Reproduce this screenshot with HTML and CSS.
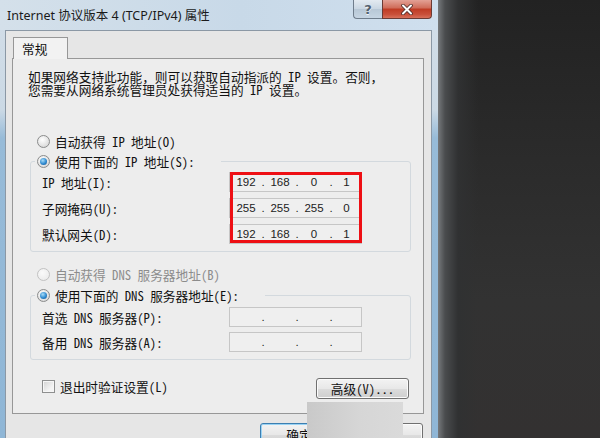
FILE: index.html
```html
<!DOCTYPE html>
<html lang="zh-CN">
<head>
  <meta charset="UTF-8">
  <title>Internet 协议版本 4 (TCP/IPv4) 属性</title>
  <link rel="stylesheet" href="styles.css">
</head>
<body>

  <div class="window">
    <div class="titlebar">
      <span class="title">Internet 协议版本 4 (TCP/IPv4) 属性</span>
      <div class="caption-btns">
        <span class="cap help">?</span>
        <span class="cap close">
          <svg width="12" height="11" viewBox="0 0 12 11">
            <path d="M2 1.5 L10 9.5 M10 1.5 L2 9.5" stroke="#4a2a26" stroke-width="3.6" stroke-linecap="round"/>
            <path d="M2 1.5 L10 9.5 M10 1.5 L2 9.5" stroke="#ffffff" stroke-width="2" stroke-linecap="round"/>
          </svg>
        </span>
      </div>
    </div>

    <div class="client">
      <div class="tabs">
        <span class="tab">常规</span>
      </div>

      <div class="panel">
        <p class="intro">如果网络支持此功能，则可以获取自动指派的 IP 设置。否则，<br>您需要从网络系统管理员处获得适当的 IP 设置。</p>

        <div class="opt first-opt"><span class="radio"></span>自动获得 IP 地址(O)</div>

        <div class="group ip-group">
          <div class="legend legend-ip"><span class="radio on"></span>使用下面的 IP 地址(S):</div>
          <div class="rows ip-rows">
            <span class="lbl">IP 地址(I):</span>
            <div class="ipf"><span class="seg">192</span><span class="dot">.</span><span class="seg">168</span><span class="dot">.</span><span class="seg">0</span><span class="dot">.</span><span class="seg last">1</span></div>
            <span class="lbl">子网掩码(U):</span>
            <div class="ipf"><span class="seg">255</span><span class="dot">.</span><span class="seg">255</span><span class="dot">.</span><span class="seg">255</span><span class="dot">.</span><span class="seg last">0</span></div>
            <span class="lbl">默认网关(D):</span>
            <div class="ipf"><span class="seg">192</span><span class="dot">.</span><span class="seg">168</span><span class="dot">.</span><span class="seg">0</span><span class="dot">.</span><span class="seg last">1</span></div>
          </div>
        </div>

        <div class="opt dns-opt disabled"><span class="radio off"></span>自动获得 DNS 服务器地址(B)</div>

        <div class="group dns-group">
          <div class="legend legend-dns"><span class="radio on"></span>使用下面的 DNS 服务器地址(E):</div>
          <div class="rows dns-rows">
            <span class="lbl">首选 DNS 服务器(P):</span>
            <div class="ipf"><span class="seg"></span><span class="dot">.</span><span class="seg"></span><span class="dot">.</span><span class="seg"></span><span class="dot">.</span><span class="seg last"></span></div>
            <span class="lbl">备用 DNS 服务器(A):</span>
            <div class="ipf"><span class="seg"></span><span class="dot">.</span><span class="seg"></span><span class="dot">.</span><span class="seg"></span><span class="dot">.</span><span class="seg last"></span></div>
          </div>
        </div>

        <div class="bottom-row">
          <label class="check"><span class="box"></span>退出时验证设置(L)</label>
          <button class="btn advanced">高级(V)...</button>
        </div>
      </div>

      <div class="actions">
        <button class="btn ok">确定</button>
        <button class="btn">取消</button>
      </div>
    </div>

    <div class="smudge"></div>
  </div>

  <div class="backdrop"></div>

</body>
</html>
```

FILE: styles.css
```css
body {
  margin: 0;
  width: 600px;
  height: 438px;
  overflow: hidden;
  display: flex;
  background: #2a2a2a;
  font-family: "Noto Sans Mono CJK SC", "Noto Sans CJK SC", monospace;
  font-size: 12.7px;
  color: #111;
}

/* Window frame */
.window {
  width: 438px;
  flex: none;
  display: flex;
  flex-direction: column;
  position: relative;
  background: linear-gradient(to bottom, #d3dee8 0, #cbd9e5 110px, #97bbd8 138px, #8fb6d6 438px);
}

.titlebar {
  height: 30px;
  flex: none;
  display: flex;
  background: linear-gradient(to right, #d4e0ea, #c8d9e8 55%, #cfdfee);
}

.title {
  flex: 1;
  padding-left: 7px;
  line-height: 31px;
  font-family: "Noto Sans", "Noto Sans CJK SC", sans-serif;
  font-size: 12.5px;
  color: #1a1a1a;
}

.caption-btns {
  display: flex;
  margin-right: 6px;
  height: 19px;
}

.cap {
  display: flex;
  align-items: center;
  justify-content: center;
  box-sizing: border-box;
  height: 19px;
  border: 1px solid #6f7d8c;
  border-top: none;
}

.help {
  width: 29px;
  border-right: none;
  border-bottom-left-radius: 4px;
  background: linear-gradient(to bottom, #e3eaf1, #c9d6e2 50%, #b7c7d6 51%, #c6d5e3);
  font-family: "DejaVu Sans", sans-serif;
  font-weight: bold;
  font-size: 13px;
  color: #53606e;
  text-shadow: 0 1px 0 #f4f7fa;
}

.close {
  width: 50px;
  border-color: #6b3b35;
  border-bottom-right-radius: 4px;
  background: linear-gradient(to bottom, #e3a195, #cf6b58 45%, #bf3b24 50%, #c9503a 80%, #d8705a);
}

/* Client area */
.client {
  flex: 1;
  margin: 0 6px 0 5px;
  border: 1px solid #8b98a5;
  border-bottom: none;
  background: #e6e6e6;
  padding: 6px 7px 0 6px;
}

.tabs {
  display: flex;
  padding-left: 1px;
}

.tab {
  position: relative;
  z-index: 1;
  box-sizing: border-box;
  width: 55px;
  height: 22px;
  margin-bottom: -1px;
  padding-left: 8px;
  line-height: 21px;
  border: 1px solid #979797;
  border-bottom: none;
  background: #f2f2f2;
}

.panel {
  box-sizing: border-box;
  height: 356px;
  border: 1px solid #979797;
  background: #ededed;
}

.intro {
  margin: 11px 0 0 15px;
  line-height: 13px;
}

/* Radio options */
.opt, .legend {
  display: flex;
  align-items: center;
  height: 20px;
}

.opt {
  padding-left: 24px;
}

.first-opt {
  margin-top: 35px;
}

.dns-opt {
  margin-top: 12px;
}

.disabled {
  color: #8c8c8c;
}

.radio {
  position: relative;
  box-sizing: border-box;
  width: 13px;
  height: 13px;
  margin-right: 5px;
  border-radius: 50%;
  border: 1px solid #8a8b8b;
  background: radial-gradient(circle at 40% 35%, #ffffff, #e2e2e2 60%, #cdcdcd);
}

.radio.on::after {
  content: "";
  position: absolute;
  left: 2px;
  top: 2px;
  width: 7px;
  height: 7px;
  border-radius: 50%;
  background: radial-gradient(circle at 40% 35%, #a8dcf8, #2f8ad0 55%, #124f88);
}

.radio.off {
  border-color: #c2c2c2;
  background: radial-gradient(circle at 40% 35%, #fafafa, #e8e8e8);
}

/* Group boxes */
.group {
  margin: 0 12px 0 17px;
  border: 1px solid #d3d9de;
  border-radius: 3px;
  padding-bottom: 7px;
}

.ip-group {
  margin-top: 10px;
}

.dns-group {
  margin-top: 11px;
}

.legend {
  margin: -11px 0 0 4px;
  padding-left: 2px;
  background: #ededed;
}

.legend-ip {
  width: 184px;
}

.legend-dns {
  width: 228px;
}

.rows {
  display: grid;
  grid-template-columns: 187px 133px;
  grid-auto-rows: 20px;
  padding-left: 11px;
}

.ip-rows {
  position: relative;
  margin-top: 1px;
  row-gap: 6px;
}

/* red marker drawn over the three address fields */
.ip-rows::after {
  content: "";
  position: absolute;
  left: 199px;
  top: 0;
  width: 132px;
  height: 71px;
  box-sizing: border-box;
  border: 3px solid #ee0f14;
}

.dns-rows {
  margin-top: 2px;
  row-gap: 5px;
}

.lbl {
  align-self: center;
  line-height: 13px;
}

.ipf {
  box-sizing: border-box;
  display: flex;
  align-items: center;
  padding-left: 1px;
  border: 1px solid #c6c6c6;
  background: #efefef;
  font-family: "Liberation Sans", sans-serif;
  font-size: 11.5px;
  color: #222;
}

.seg {
  width: 30px;
  text-align: center;
}

.seg.last {
  width: 27px;
}

.dot {
  width: 4px;
  text-align: center;
}

/* Bottom row */
.bottom-row {
  display: flex;
  justify-content: space-between;
  align-items: flex-start;
  margin-top: 16px;
  padding: 0 14px 0 29px;
}

.check {
  display: flex;
  align-items: center;
  height: 20px;
}

.box {
  box-sizing: border-box;
  width: 13px;
  height: 13px;
  margin-right: 5px;
  border: 1px solid #8e8f8f;
  background: linear-gradient(135deg, #d2d2d2, #f4f4f4 70%);
  box-shadow: inset 0 0 0 1px #f6f6f6;
}

.btn {
  box-sizing: border-box;
  height: 21px;
  padding: 0;
  border: 1px solid #707070;
  border-radius: 3px;
  background: linear-gradient(to bottom, #f3f3f3, #e8e8e8 50%, #dcdcdc 51%, #cfcfcf);
  box-shadow: inset 0 0 0 1px #fbfbfb;
  font-family: inherit;
  font-size: 12.7px;
  color: #111;
}

.advanced {
  width: 93px;
  margin-top: 2px;
}

.actions {
  display: flex;
  justify-content: flex-end;
  gap: 7px;
  margin-top: 9px;
  padding-right: 1px;
}

.actions .btn {
  width: 78px;
  height: 23px;
}

.btn.ok {
  border-color: #3c7fb1;
  box-shadow: inset 0 0 0 1px #9ad3f4;
}

/* blurred patch over the buttons */
.smudge {
  position: absolute;
  left: 307px;
  top: 402px;
  width: 96px;
  height: 36px;
  background: linear-gradient(to right, #c9c9c9, #d6d6d6 55%, #dadada);
}

/* desktop behind the dialog */
.backdrop {
  flex: 1;
  background:
    linear-gradient(to right, #76797c 0, #4a4c4e 7px, #303132 20px, rgba(40, 40, 40, 0) 40px),
    linear-gradient(to bottom, #222222 0, #2b2b2b 160px, #323232 300px, #333131 438px);
}
```
